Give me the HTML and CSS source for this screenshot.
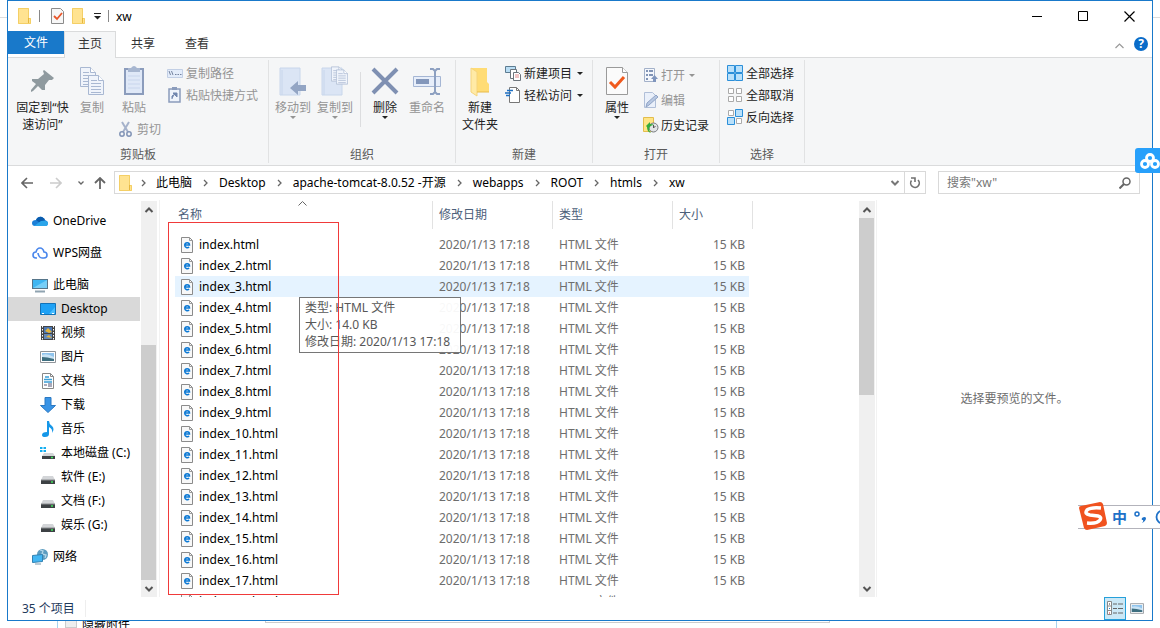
FILE: index.html
```html
<!DOCTYPE html>
<html lang="zh-CN">

<head>
    <meta charset="UTF-8">
    <meta name="viewport" content="width=device-width, initial-scale=1.0">
    <title>xw</title>
    <link rel="stylesheet" href="styles.css">
</head>

<body>
    <!-- shared icons -->
    <svg class="defs" width="0" height="0">
        <symbol id="folder" viewBox="0 0 14 18">
            <path d="M0 1h11v10h2v6H0z" fill="#ffe391" />
            <path d="M.5 1.500h10v10h2v5H.5z" fill="none" stroke="#f4cf66" />
            <path d="M10.500 11v5" stroke="#e6b73e" />
        </symbol>
        <symbol id="html-file" viewBox="0 0 12 16">
            <path d="M.5.5h8l3 3v12H.5z" fill="#f8f8f8" stroke="#8b8b8b" />
            <path d="M8.500.5v3h3" fill="none" stroke="#9a9a9a" />
            <path d="M3.500 8h5c0-3-4.500-3-4.800 0 0 2.800 2.800 3.200 4.500 2.200" fill="none" stroke="#0b78d4" stroke-width="1.500" />
        </symbol>
        <symbol id="drive" viewBox="0 0 16 16">
            <path d="M3 5h10l2 4H1z" fill="#d3d5d8" />
            <path d="M1 9h14v4H1z" fill="#3d4144" />
            <path d="M1 9h14" stroke="#8a8d90" />
            <path d="M11 11h2" stroke="#3fe05a" stroke-width="1.500" />
        </symbol>
        <symbol id="right" viewBox="0 0 5 8">
            <path d="M1 1l3 3-3 3" fill="none" stroke="#666" stroke-width="1.300" />
        </symbol>
        <symbol id="caret" viewBox="0 0 6 3">
            <path d="M0 0h6L3 3z" fill="currentColor" />
        </symbol>
        <symbol id="up" viewBox="0 0 10 6">
            <path d="M1.500 5L5 1.500 8.500 5" fill="none" stroke="currentColor" stroke-width="2" />
        </symbol>
        <symbol id="down" viewBox="0 0 10 6">
            <path d="M1.500 1L5 4.500 8.500 1" fill="none" stroke="currentColor" stroke-width="2" />
        </symbol>
        <symbol id="photo" viewBox="0 0 16 12">
            <path d="M.5.5h15v11H.5z" fill="#fff" stroke="#8f9499" />
            <path d="M2 2h12v8H2z" fill="#8fc4ee" />
            <path d="M2 4q5-2 12 2v4H2z" fill="#c9e3f5" />
            <path d="M2 6q5 0 12 2v2H2z" fill="#3e6f80" />
        </symbol>
        <symbol id="sheet" viewBox="0 0 16 20">
            <path d="M.5.5h10l5 5v14H.5z" fill="#f0f4fb" stroke="#a9b8d2" />
            <path d="M10.500.5v5h5" fill="#fff" stroke="#a9b8d2" />
            <path d="M3 5.500h6M3 8.500h10M3 11.500h10M3 14.500h10M3 17.500h10" stroke="#a9b8d2" />
        </symbol>
    </svg>

    <div class="window">
        <header class="titlebar">
            <svg width="14" height="18"><use href="#folder" /></svg>
            <i class="bar"></i>
            <button class="quick" aria-label="属性">
                <svg width="13" height="16" viewBox="0 0 13 16"><path d="M.5.5h9l3 3v12H.5z" fill="#f7f7f7" stroke="#8b8b8b" /><path d="M3 8l3 3 5-6" fill="none" stroke="#e8562a" stroke-width="1.800" /></svg>
            </button>
            <button class="quick" aria-label="新建文件夹"><svg width="14" height="18"><use href="#folder" /></svg></button>
            <button class="quick small" aria-label="自定义快速访问工具栏">
                <svg width="7" height="7" viewBox="0 0 7 7"><path d="M0 .5h7" stroke="#222" /><path d="M0 3h7L3.500 6.500z" fill="#222" /></svg>
            </button>
            <i class="bar"></i>
            <span class="title">xw</span>
            <div class="controls">
                <button aria-label="最小化"><svg width="11" height="11" viewBox="0 0 11 11"><path d="M0 5.500h10" stroke="#000" /></svg></button>
                <button aria-label="最大化"><svg width="11" height="11" viewBox="0 0 11 11"><path d="M.5.5h9v9h-9z" fill="none" stroke="#000" /></svg></button>
                <button aria-label="关闭"><svg width="11" height="11" viewBox="0 0 11 11"><path d="M.5.5l10 10M10.500.5l-10 10" stroke="#000" stroke-width="1.200" /></svg></button>
            </div>
        </header>

        <nav class="tabs">
            <button class="tab file">文件</button>
            <button class="tab active">主页</button>
            <button class="tab">共享</button>
            <button class="tab">查看</button>
            <div class="tab-tools">
                <button class="fold" aria-label="最小化功能区"><svg width="9" height="6" viewBox="0 0 9 6"><path d="M.5 5l4-4 4 4" fill="none" stroke="#999" stroke-width="1.200" /></svg></button>
                <button class="help" aria-label="帮助">?</button>
            </div>
        </nav>

        <section class="ribbon">
            <div class="group clipboard">
                <div class="tools">
                    <button class="big pin">
                        <svg width="32" height="32" viewBox="0 0 32 32"><path d="M17 5l10 8-2 2-3 0-4 5 0 5-3 0-4-4-5 5-2 1 0-2 5-6-4-3 0-2 6 0 6-5-1-3z" fill="#8f9a9f" /></svg>
                        <span>固定到“快<br>速访问”</span>
                    </button>
                    <button class="big copy" disabled>
                        <svg width="26" height="32" viewBox="0 0 26 32"><use href="#sheet" x="1" y="2" width="16" height="20" /><use href="#sheet" x="9" y="10" width="16" height="20" /></svg>
                        <span>复制</span>
                    </button>
                    <div class="paste">
                        <button class="big" disabled>
                            <svg width="22" height="32" viewBox="0 0 22 32"><path d="M2 4h18v25H2z" fill="#dfe8f7" stroke="#8b9cbc" stroke-width="2" /><path d="M5 3h3q3-4 6 0h3v4H5z" fill="#a7b6d0" /><path d="M5 11h12M5 15h12M5 19h12M5 23h12" stroke="#c8d5ec" /></svg>
                            <span>粘贴</span>
                        </button>
                        <button class="small" disabled>
                            <svg width="16" height="16" viewBox="0 0 16 16"><path d="M4 1l6 10M11 1L5 11" fill="none" stroke="#a5b2cb" stroke-width="2" /><circle cx="4" cy="13" r="2.200" fill="none" stroke="#8294b6" stroke-width="1.500" /><circle cx="11" cy="13" r="2.200" fill="none" stroke="#8294b6" stroke-width="1.500" /></svg>
                            剪切
                        </button>
                    </div>
                    <div class="stack">
                        <button class="small" disabled>
                            <svg width="16" height="16" viewBox="0 0 16 16"><path d="M.5 4.500h15v8H.5z" fill="#e3ecfa" stroke="#c2cfe5" /><path d="M2 6l1.500 4M4.500 6L6 10" fill="none" stroke="#74839f" /><path d="M8 9.500h1.500M10.500 9.500H12M13 9.500h1.500" stroke="#74839f" /></svg>
                            复制路径
                        </button>
                        <button class="small" disabled>
                            <svg width="16" height="16" viewBox="0 0 16 16"><path d="M2 2h11v13H2z" fill="#eef3fb" stroke="#8b9cbc" stroke-width="1.500" /><path d="M5 0h5v3H5z" fill="#8b9cbc" /><path d="M5 12V9l3-2M6 6h4v4z" fill="#7186ae" stroke="#7186ae" /></svg>
                            粘贴快捷方式
                        </button>
                    </div>
                </div>
                <div class="group-name">剪贴板</div>
            </div>

            <div class="group organize">
                <div class="tools">
                    <button class="big" disabled>
                        <svg width="28" height="32" viewBox="0 0 28 32"><path d="M1 3h20v27H1z" fill="#dbe5f5" stroke="#c8d6eb" /><path d="M3 30V5" stroke="#c8d6eb" /><path d="M11 23l8-7v4h8v6h-8v4z" fill="#93a5c4" /></svg>
                        <span>移动到</span>
                        <svg class="arrow" width="6" height="3"><use href="#caret" /></svg>
                    </button>
                    <button class="big" disabled>
                        <svg width="28" height="32" viewBox="0 0 28 32"><path d="M1 3h20v27H1z" fill="#dbe5f5" stroke="#c8d6eb" /><path d="M3 30V5" stroke="#c8d6eb" /><use href="#sheet" x="10" y="1" width="12" height="16" /><use href="#sheet" x="15" y="4" width="12" height="16" /></svg>
                        <span>复制到</span>
                        <svg class="arrow" width="6" height="3"><use href="#caret" /></svg>
                    </button>
                    <i class="split"></i>
                    <button class="big">
                        <svg width="28" height="32" viewBox="0 0 28 32"><path d="M2 4l24 24M26 4L2 28" stroke="#7f90b2" stroke-width="4" /></svg>
                        <span>删除</span>
                        <svg class="arrow" width="6" height="3"><use href="#caret" /></svg>
                    </button>
                    <button class="big" disabled>
                        <svg width="30" height="32" viewBox="0 0 30 32"><path d="M1.500 11.500h27v10h-27z" fill="#e7eefa" stroke="#a5b6d4" /><path d="M4 14h13v5H4z" fill="#8397bb" /><path d="M18 4h3l2 2 2-2h3M18 29h3l2-2 2 2h3M23 6v21" fill="none" stroke="#8da0c1" stroke-width="2" /></svg>
                        <span>重命名</span>
                    </button>
                </div>
                <div class="group-name">组织</div>
            </div>

            <div class="group create">
                <div class="tools">
                    <button class="big">
                        <svg width="22" height="32" viewBox="0 0 22 32"><path d="M3 3h15v14l2 2v8H3z" fill="#ffdc75" /><path d="M2 3l6 4v24l-6-4z" fill="#ffeaa6" stroke="#f5d47c" /><path d="M8 27h12" stroke="#e8bb4a" /></svg>
                        <span>新建<br>文件夹</span>
                    </button>
                    <div class="stack">
                        <button class="small">
                            <svg width="16" height="16" viewBox="0 0 16 16"><path d="M.5 1.500h10v6H.5z" fill="#b9ddf4" stroke="#5d7c91" /><path d="M5.500 4.500h6v9h-6z" fill="#fff" stroke="#6d757c" /><path d="M8.500 7.500h5l2 2v6h-7z" fill="#fff" stroke="#6d757c" /><path d="M10 10h4M10 12h4" stroke="#e08a8a" /></svg>
                            新建项目
                            <svg width="6" height="3"><use href="#caret" /></svg>
                        </button>
                        <button class="small">
                            <svg width="16" height="16" viewBox="0 0 16 16"><path d="M4.500.5h7l3 3v12h-10z" fill="#fff" stroke="#777" /><path d="M11.500.5v3h3" fill="none" stroke="#777" /><path d="M2 3.500h6M0 6h6M1 8.500h4" stroke="#1d6fc2" stroke-width="1.300" /></svg>
                            轻松访问
                            <svg width="6" height="3"><use href="#caret" /></svg>
                        </button>
                    </div>
                </div>
                <div class="group-name">新建</div>
            </div>

            <div class="group open">
                <div class="tools">
                    <button class="big">
                        <svg width="22" height="32" viewBox="0 0 22 32"><path d="M.5 2.500h16l5 5v22H.5z" fill="#fbfbfb" stroke="#9a9a9a" /><path d="M16.500 2.500v5h5" fill="#fff" stroke="#9a9a9a" /><path d="M4 17l5 5 9-10" fill="none" stroke="#f05a1e" stroke-width="3" /></svg>
                        <span>属性</span>
                        <svg class="arrow" width="6" height="3"><use href="#caret" /></svg>
                    </button>
                    <div class="stack loose">
                        <button class="small" disabled>
                            <svg width="16" height="16" viewBox="0 0 16 16"><path d="M1.500 1.500h10v13h-10z" fill="#f4f7fc" stroke="#a3b1c9" /><path d="M3 4h2M3 8h2M3 12h2M6 4h4M6 8h4" stroke="#8194b6" stroke-width="2" /><path d="M8 12l3.500-4 3.500 4h-2v3h-3v-3z" fill="#7f95bd" /></svg>
                            打开
                            <svg width="6" height="3"><use href="#caret" /></svg>
                        </button>
                        <button class="small" disabled>
                            <svg width="16" height="16" viewBox="0 0 16 16"><path d="M1.500.5h8l3 3v12h-11z" fill="#eaf0fa" stroke="#b0bfd8" /><path d="M3 15l1-4 9-8 2 2-9 8z" fill="#b8c8e2" stroke="#8fa3c5" /></svg>
                            编辑
                        </button>
                        <button class="small">
                            <svg width="16" height="16" viewBox="0 0 16 16"><path d="M.5.5h10v14H.5z" fill="#ffe586" stroke="#e3bd4c" /><circle cx="10.500" cy="10.500" r="4.500" fill="#e2e4e6" stroke="#777c80" /><path d="M10.500 8v3l2-2" fill="none" stroke="#555" /><path d="M3 9l4-4v2q3 0 4 1-4 0-5 4 0 2 2 4-4-1-4-6z" fill="#35ab3c" /></svg>
                            历史记录
                        </button>
                    </div>
                </div>
                <div class="group-name">打开</div>
            </div>

            <div class="group select">
                <div class="tools">
                    <div class="stack">
                        <button class="small">
                            <svg width="16" height="16" viewBox="0 0 16 16"><path d="M.5.5h7v7h-7zM8.500.5h7v7h-7zM.5 8.500h7v7h-7zM8.500 8.500h7v7h-7z" fill="#b9e0fa" stroke="#2b8fd9" /></svg>
                            全部选择
                        </button>
                        <button class="small">
                            <svg width="16" height="16" viewBox="0 0 16 16"><path d="M1.500 1.500h5v5h-5zM9.500 1.500h5v5h-5zM1.500 9.500h5v5h-5zM9.500 9.500h5v5h-5z" fill="#fff" stroke="#aaa" /></svg>
                            全部取消
                        </button>
                        <button class="small">
                            <svg width="16" height="16" viewBox="0 0 16 16"><path d="M1.500 1.500h5v5h-5zM9.500 9.500h5v5h-5z" fill="#fff" stroke="#aaa" /><path d="M8.500.5h7v7h-7zM.5 8.500h7v7h-7z" fill="#b9e0fa" stroke="#2b8fd9" /></svg>
                            反向选择
                        </button>
                    </div>
                </div>
                <div class="group-name">选择</div>
            </div>
        </section>

        <div class="location">
            <div class="history">
                <button aria-label="后退"><svg width="12" height="12" viewBox="0 0 12 12"><path d="M12 6H1M6 1L1 6l5 5" fill="none" stroke="#666" stroke-width="1.600" /></svg></button>
                <button aria-label="前进"><svg width="12" height="12" viewBox="0 0 12 12"><path d="M0 6h11M6 1l5 5-5 5" fill="none" stroke="#ccc" stroke-width="1.600" /></svg></button>
                <button class="recent" aria-label="最近浏览的位置"><svg width="6" height="4"><path d="M.5.5L3 3 5.500.5" fill="none" stroke="#666" stroke-width="1.300" /></svg></button>
                <button class="parent" aria-label="上移"><svg width="12" height="12" viewBox="0 0 12 12"><path d="M6 12V1M1 6l5-5 5 5" fill="none" stroke="#666" stroke-width="1.800" /></svg></button>
            </div>
            <div class="address">
                <svg width="14" height="18"><use href="#folder" /></svg>
                <svg class="sep first" width="5" height="8"><use href="#right" /></svg>
                <a href="#">此电脑</a>
                <svg class="sep" width="5" height="8"><use href="#right" /></svg>
                <a href="#">Desktop</a>
                <svg class="sep" width="5" height="8"><use href="#right" /></svg>
                <a href="#">apache-tomcat-8.0.52 -开源</a>
                <svg class="sep" width="5" height="8"><use href="#right" /></svg>
                <a href="#">webapps</a>
                <svg class="sep" width="5" height="8"><use href="#right" /></svg>
                <a href="#">ROOT</a>
                <svg class="sep" width="5" height="8"><use href="#right" /></svg>
                <a href="#">htmls</a>
                <svg class="sep" width="5" height="8"><use href="#right" /></svg>
                <a href="#">xw</a>
                <button class="drop" aria-label="以前的位置"><svg width="10" height="6"><use href="#down" /></svg></button>
                <button class="refresh" aria-label="刷新"><svg width="12" height="12" viewBox="0 0 12 12"><path d="M2.500 3.500a4.300 4.300 0 1 0 6.500-.5" fill="none" stroke="#707070" stroke-width="1.600" /><path d="M2 1h4v4" fill="none" stroke="#707070" stroke-width="1.600" /></svg></button>
            </div>
            <label class="search">
                <input type="text" placeholder='搜索"xw"' aria-label="搜索">
                <svg width="12" height="12" viewBox="0 0 12 12"><circle cx="7.500" cy="4.500" r="3.500" fill="none" stroke="#666" stroke-width="1.500" /><path d="M5 7l-4.500 4.500" stroke="#666" stroke-width="2" /></svg>
            </label>
        </div>

        <main class="content">
            <nav class="sidebar">
                <a href="#" class="root"><svg width="16" height="16" viewBox="0 0 16 16"><path d="M3 13q-3 0-3-3t4-3q2-4 6-3 2 1 3 3 3 1 3 3t-2 3z" fill="#1b7fd8" /><path d="M4 7q2-4 6-3 2 1 3 3l-5 3z" fill="#0a5cad" /><path d="M2 13l7-5q6-1 7 2 0 3-2 3z" fill="#2ba5ea" /></svg>OneDrive</a>
                <a href="#" class="root"><svg width="16" height="16" viewBox="0 0 16 16"><path d="M5 13H4q-3 0-3-3t3-3q1-4 4-4t4 4q3 0 3 3t-3 3h-2q-2 0-3-2T6 8" fill="none" stroke="#4a87ec" stroke-width="1.600" /></svg>WPS网盘</a>
                <a href="#" class="root"><svg width="16" height="16" viewBox="0 0 16 16"><path d="M0 2h16v10H0z" fill="#56758a" /><path d="M1 3h14v8H1z" fill="#3fb6f2" /><path d="M1 11L15 3v8z" fill="#77cff8" /><path d="M3 14.500h10" stroke="#8fa3b0" stroke-width="2" /></svg>此电脑</a>
                <a href="#" class="current"><svg width="16" height="16" viewBox="0 0 16 16"><path d="M.5 2.500h15v11H.5z" fill="#1ea1f5" stroke="#1272b8" /><path d="M9 13l6-7v7z" fill="#48bdff" /><path d="M2 12.500h2M12 12.500h2" stroke="#fff" /></svg>Desktop</a>
                <a href="#"><svg width="16" height="16" viewBox="0 0 16 16"><path d="M1 1h14v14H1z" fill="#444" /><path d="M4 2h8v6H4z" fill="#4b77b5" /><path d="M4 9h8v5H4z" fill="#6388b7" /><path d="M5 6l3-3 4 4-3 1zM6 12l3-2 3 3z" fill="#e3b43b" /><path d="M2.500 1v14M13.500 1v14" stroke="#fff" stroke-dasharray="1.500 1.500" /></svg>视频</a>
                <a href="#"><svg width="16" height="12"><use href="#photo" /></svg>图片</a>
                <a href="#"><svg width="16" height="16" viewBox="0 0 16 16"><path d="M2.500.5h8l3 3v12h-11z" fill="#fff" stroke="#888" /><path d="M10.500.5v3h3" fill="none" stroke="#888" /><path d="M5 4h4M4 6.500h8M4 9h8" stroke="#3b9fd6" stroke-width="1.300" /><path d="M4 12h3M8 11h4M8 13h4" stroke="#557" /></svg>文档</a>
                <a href="#"><svg width="16" height="16" viewBox="0 0 16 16"><path d="M5 .5h6v8h4.500L8 15.500.5 8.500H5z" fill="#3994e6" stroke="#2b79c2" /></svg>下载</a>
                <a href="#"><svg width="16" height="16" viewBox="0 0 16 16"><path d="M7 0h2q0 3 3 5 3 3 0 7 1-4-3-6v7q0 3-4 3-3 0-3-2 0-3 5-3z" fill="#1697e8" /></svg>音乐</a>
                <a href="#"><svg width="16" height="16" viewBox="0 0 16 16"><path d="M0 2h2.500v2H0zM3.500 2H6v2H3.500zM0 5h2.500v2H0zM3.500 5H6v2H3.500z" fill="#13aef0" /><path d="M4 8h9l2 3H2z" fill="#d3d5d8" /><path d="M2 11h13v3H2z" fill="#3d4144" /><path d="M11 12.500h2" stroke="#3fe05a" stroke-width="1.500" /></svg>本地磁盘 (C:)</a>
                <a href="#"><svg width="16" height="16"><use href="#drive" y="2" width="16" height="16" /></svg>软件 (E:)</a>
                <a href="#"><svg width="16" height="16"><use href="#drive" y="2" width="16" height="16" /></svg>文档 (F:)</a>
                <a href="#"><svg width="16" height="16"><use href="#drive" y="2" width="16" height="16" /></svg>娱乐 (G:)</a>
                <a href="#" class="root"><svg width="16" height="16" viewBox="0 0 16 16"><circle cx="10.500" cy="5.500" r="5.500" fill="#5c9cc0" /><path d="M8 1l3 1-1 3 4 1-1 3" fill="none" stroke="#b4d6e8" stroke-width="1.300" /><path d="M.5 6.500l10-1v7l-10 1z" fill="#42b6f3" stroke="#3182b3" /><path d="M3 15h6" stroke="#7c99ab" /></svg>网络</a>
            </nav>
            <div class="scrollbar side-scroll">
                <svg width="10" height="6"><use href="#up" /></svg>
                <div class="track"><div class="thumb"></div></div>
                <svg width="10" height="6"><use href="#down" /></svg>
            </div>

            <div class="files">
                <table>
                    <thead>
                        <tr>
                            <th class="name"><span>名称</span><svg class="sorted" width="9" height="5" viewBox="0 0 9 5"><path d="M.5 4.500l4-4 4 4" fill="none" stroke="#666" /></svg></th>
                            <th class="date"><span>修改日期</span></th>
                            <th class="type"><span>类型</span></th>
                            <th><span>大小</span></th>
                        </tr>
                    </thead>
                    <tbody id="rows"></tbody>
                </table>
                <div class="marker"></div>
                <div class="tooltip">类型: HTML 文件<br>大小: 14.0 KB<br>修改日期: 2020/1/13 17:18</div>
            </div>
            <div class="scrollbar file-scroll">
                <svg width="10" height="6"><use href="#up" /></svg>
                <div class="track"><div class="thumb"></div></div>
                <svg width="10" height="6"><use href="#down" /></svg>
            </div>

            <aside class="preview">选择要预览的文件。</aside>
        </main>

        <footer class="status">
            <span class="count">35 个项目</span>
            <button class="view on" aria-label="详细信息">
                <svg width="16" height="15" viewBox="0 0 16 15"><path d="M.5.5h4v13h-4zM.5 5h4M.5 9.500h4" fill="#fff" stroke="#888" /><path d="M6 3h4M11 3h5M6 7.500h4M11 7.500h5M6 12h4M11 12h5" stroke="#666" /><path d="M2 3h1" stroke="#333" /><path d="M2 7.500h1" stroke="#28c" /><path d="M2 12h1" stroke="#d22" /></svg>
            </button>
            <button class="view" aria-label="大缩略图"><svg width="14" height="11"><use href="#photo" /></svg></button>
        </footer>
    </div>

    <!-- page behind the window -->
    <div class="behind">
        <label><input type="checkbox">隐藏附件</label>
        <div class="panel"></div>
    </div>

    <button class="cloud" aria-label="网盘">
        <svg width="20" height="16" viewBox="0 0 20 16"><g fill="none" stroke="#fff" stroke-width="2.800"><circle cx="10" cy="5" r="3.500" /><circle cx="5" cy="11" r="3.500" /><circle cx="15" cy="11" r="3.500" /></g></svg>
    </button>

    <div class="ime">
        <svg width="30" height="30" viewBox="0 0 30 30"><path d="M1 6q0-2 2-2l19-4q2 0 3 2l4 19q0 2-2 3L9 28q-2 0-3-2z" fill="#f0521f" /><path d="M23 6q-10-1-14 2-3 4 3 5l8 1q4 1 2 4-3 4-13 3" fill="none" stroke="#fff" stroke-width="3.500" /></svg>
        <span>中</span>
        <svg width="14" height="14" viewBox="0 0 14 14"><circle cx="3" cy="4" r="2" fill="none" stroke="#1e71c8" stroke-width="1.500" /><path d="M8 8q3-2 4 0 0 3-4 5 2-2 1-3-2 0-1-2z" fill="#1e71c8" /></svg>
        <svg width="14" height="16" viewBox="0 0 14 16"><circle cx="8" cy="8" r="6.500" fill="none" stroke="#1e71c8" stroke-width="1.800" /></svg>
    </div>

    <script>
        const rows = document.getElementById("rows");

        for (let i = 1; i <= 18; i++) {
            let name = i === 1 ? "index.html" : `index_${i}.html`;
            let tr = document.createElement("tr");
            if (i === 3) tr.className = "hover";
            tr.innerHTML = `
                <td class="name"><svg width="12" height="16"><use href="#html-file" /></svg>${name}</td>
                <td>2020/1/13 17:18</td>
                <td>HTML 文件</td>
                <td class="size">15 KB</td>`;
            rows.appendChild(tr);
        }
    </script>
</body>

</html>
```
FILE: styles.css
```css
* {
    box-sizing: border-box;
}

body {
    position: relative;
    display: flex;
    flex-direction: column;
    height: 100vh;
    margin: 0;
    padding: 0 7px;
    overflow: hidden;
    background: linear-gradient(#fff 17px, #ddd 17px, #ddd 18px, #fff 18px);
    color: #000;
    font: 12px/17px "Noto Sans", "Noto Sans CJK SC", sans-serif;
}

button {
    margin: 0;
    padding: 0;
    border: 0;
    background: none;
    color: inherit;
    font: inherit;
    white-space: nowrap;
}

a {
    color: inherit;
    text-decoration: none;
}

svg {
    flex: none;
}

.defs {
    position: absolute;
}

.window {
    display: flex;
    flex-direction: column;
    flex: 1;
    min-height: 0;
    border: 1px solid #1979ca;
    background: #fff;
}

/* title bar */
.titlebar {
    display: flex;
    align-items: center;
    flex: none;
    height: 30px;
    padding-left: 10px;
}

.titlebar .bar {
    width: 1px;
    height: 12px;
    margin: 0 7px;
    background: #888;
}

.quick {
    display: flex;
    margin: 0 4px;
}

.quick.small {
    margin: 0 0 0 4px;
}

.title {
    flex: 1;
}

.controls {
    display: flex;
    align-self: stretch;
}

.controls button {
    width: 46px;
}

.controls svg {
    display: block;
    margin: 0 auto;
}

/* tabs */
.tabs {
    display: flex;
    flex: none;
    height: 27px;
    border-bottom: 1px solid #dadbdc;
}

.tab {
    width: 54px;
    height: 25px;
    color: #333;
}

.tab.file {
    width: 56px;
    height: 23px;
    background: #1979ca;
    color: #fff;
}

.tab.active {
    width: 52px;
    height: 27px;
    padding-bottom: 3px;
    border: 1px solid #dadbdc;
    border-bottom: 0;
    background: #f5f6f7;
}

.tab-tools {
    display: flex;
    align-items: center;
    gap: 10px;
    margin-left: auto;
    padding-right: 4px;
}

.help {
    width: 14px;
    height: 14px;
    border-radius: 50%;
    background: #0a6cc9;
    color: #fff;
    font-weight: bold;
    line-height: 14px;
}

/* ribbon */
.ribbon {
    display: flex;
    flex: none;
    height: 108px;
    padding: 2px 0;
    border-bottom: 1px solid #dadbdc;
    background: #f5f6f7;
    color: #222;
}

.group {
    display: flex;
    flex-direction: column;
    border-right: 1px solid #e1e2e3;
}

.clipboard {
    width: 261px;
}

.organize {
    width: 187px;
}

.create {
    width: 137px;
}

.open {
    width: 127px;
}

.select {
    width: 85px;
}

.tools {
    display: flex;
    flex: 1;
    padding: 4px 0 0 3px;
}

.group-name {
    color: #5a5a5a;
    text-align: center;
}

.big {
    display: flex;
    flex-direction: column;
    align-items: center;
    width: 42px;
    height: 71px;
    padding-top: 1px;
    text-align: center;
}

.big svg {
    margin-bottom: 2px;
}

.big .arrow {
    margin: 0;
}

.big:disabled,
.small:disabled {
    color: #949494;
}

.pin {
    width: 63px;
}

.copy {
    width: 36px;
}

.paste {
    display: flex;
    flex-direction: column;
    width: 50px;
}

.paste .big {
    width: 48px;
    height: 56px;
}

.paste .small {
    margin-left: 8px;
}

.small {
    display: flex;
    align-items: center;
    gap: 3px;
    height: 18px;
}

.small svg:nth-child(2) {
    margin-left: 2px;
}

.stack {
    display: flex;
    flex-direction: column;
    gap: 4px;
    padding-left: 7px;
}

.stack.loose {
    gap: 7px;
    padding: 2px 0 0 5px;
}

.loose .small {
    gap: 2px;
}

.create .stack,
.select .stack {
    padding-left: 4px;
}

.split {
    width: 1px;
    height: 55px;
    margin: 8px 3px 0 4px;
    background: #dcdddf;
}

/* address bar */
.location {
    display: flex;
    align-items: center;
    flex: none;
    height: 33px;
    padding: 0 12px 0 13px;
}

.history {
    display: flex;
    align-items: center;
    width: 93px;
}

.history button {
    display: flex;
    width: 30px;
}

.history .recent {
    width: 14px;
    margin-left: -2px;
}

.history .parent {
    width: 20px;
    margin-left: 3px;
}

.address {
    display: flex;
    align-items: center;
    flex: 1;
    height: 23px;
    padding-left: 4px;
    border: 1px solid #d9d9d9;
    line-height: 16px;
    white-space: nowrap;
}

.address .sep {
    margin: 0 11px;
}

.address .first {
    margin: 0 10px 0 8px;
}

.drop {
    display: flex;
    margin: 0 4px 0 auto;
    color: #777;
}

.refresh {
    display: flex;
    align-items: center;
    justify-content: center;
    width: 21px;
    height: 21px;
    border-left: 1px solid #d9d9d9;
}

.search {
    display: flex;
    align-items: center;
    width: 202px;
    height: 23px;
    margin-left: 12px;
    padding: 0 8px;
    border: 1px solid #d9d9d9;
}

.search input {
    flex: 1;
    min-width: 0;
    padding: 0;
    border: 0;
    outline: 0;
    background: none;
    font: inherit;
}

.search input::placeholder {
    color: #777;
}

/* content */
.content {
    display: flex;
    flex: 1;
    min-height: 0;
    padding-top: 1px;
    overflow: hidden;
}

.sidebar {
    display: flex;
    flex-direction: column;
    flex: none;
    width: 133px;
    padding-top: 9px;
}

.sidebar a {
    display: flex;
    align-items: center;
    flex: none;
    gap: 5px;
    width: 132px;
    height: 24px;
    padding: 0 0 1px 32px;
    white-space: nowrap;
}

.sidebar .root {
    margin-top: 8px;
    padding-left: 24px;
}

.sidebar .root:first-child {
    margin-top: 0;
}

.sidebar .current {
    background: #d9d9d9;
}

.scrollbar {
    display: flex;
    flex-direction: column;
    align-items: center;
    flex: none;
    width: 16px;
    margin-top: 1px;
    background: #f0f0f0;
    color: #555;
}

.scrollbar svg {
    margin: 6px 0 5px;
}

.track {
    display: flex;
    flex-direction: column;
    flex: 1;
    width: 100%;
}

.thumb {
    width: 15px;
    background: #cdcdcd;
}

.side-scroll .thumb {
    height: 65%;
    margin-top: auto;
}

.file-scroll .thumb {
    height: 49%;
}

.files {
    position: relative;
    flex: 1;
    min-width: 0;
    margin-left: 2px;
    padding-left: 15px;
    border-left: 1px solid #f2f2f2;
}

table {
    width: 578px;
    border-spacing: 0;
    table-layout: fixed;
}

th {
    height: 34px;
    padding: 1px 0 0;
    color: #4c607a;
    font-weight: normal;
    text-align: left;
    vertical-align: top;
}

th span {
    display: block;
    height: 28px;
    padding-left: 6px;
    border-right: 1px solid #e2e2e2;
    line-height: 28px;
}

th.name {
    position: relative;
    width: 258px;
}

th.name span {
    padding-left: 3px;
}

.sorted {
    position: absolute;
    top: 1px;
    left: 123px;
}

.date,
.type {
    width: 120px;
}

td {
    height: 21px;
    padding: 0 0 0 6px;
    color: #6d6d6d;
    line-height: 17px;
}

td.name {
    color: #000;
}

td.name svg {
    margin-right: 6px;
    vertical-align: middle;
}

td.size {
    padding-right: 4px;
    border-right: 4px solid #fff;
    text-align: right;
}

.hover {
    background: #e5f3ff;
}

.tooltip {
    position: absolute;
    top: 97px;
    left: 139px;
    width: 162px;
    padding: 1px 5px 2px;
    border: 1px solid #767676;
    background: rgba(255, 255, 255, .95);
    color: #575757;
    white-space: nowrap;
}

.marker {
    position: absolute;
    z-index: 1;
    top: 22px;
    bottom: 2px;
    left: 8px;
    width: 171px;
    border: 1px solid #f03a3a;
}

.preview {
    display: flex;
    align-items: center;
    justify-content: center;
    width: 276px;
    margin-left: 1px;
    border-left: 1px solid #f2f2f2;
    color: #6d6d6d;
}

/* status bar */
.status {
    display: flex;
    align-items: center;
    flex: none;
    height: 23px;
    padding: 0 4px 0 14px;
    color: #1e395b;
}

.count {
    margin-right: auto;
    padding-right: 10px;
    border-right: 1px solid #eee;
}

.view {
    display: flex;
    align-items: center;
    justify-content: center;
    width: 22px;
    height: 23px;
}

.view.on {
    border: 1px solid #26a0da;
    background: #cbe8f6;
}

/* page behind */
.behind {
    display: flex;
    flex: none;
    height: 7px;
    margin: 0 96px 0 50px;
    overflow: hidden;
    border: solid #a9d3ef;
    border-width: 0 1px;
}

.behind label {
    display: flex;
    width: 207px;
    height: 17px;
    margin-top: -5px;
}

.behind input {
    appearance: none;
    width: 12px;
    height: 12px;
    margin: 0 5px 0 7px;
    border: 1px solid #ccc;
    background: #eee;
}

.panel {
    width: 565px;
    height: 2px;
    border: 1px solid #ccc;
    border-top: 0;
}

/* floating tools */
.cloud {
    position: absolute;
    top: 148px;
    right: 0;
    width: 25px;
    height: 25px;
    padding-left: 5px;
    border-radius: 3px 0 0 3px;
    background: #27a0fb;
}

.cloud svg {
    display: block;
}

.ime {
    position: absolute;
    top: 505px;
    right: 0;
    display: flex;
    align-items: center;
    gap: 7px;
    width: 82px;
    height: 24px;
    border: solid #b3b3bb;
    border-width: 1px 0;
    background: #fff;
    color: #1e71c8;
    font-size: 15px;
    font-weight: bold;
}

.ime svg:first-child {
    margin-right: -3px;
}
```
